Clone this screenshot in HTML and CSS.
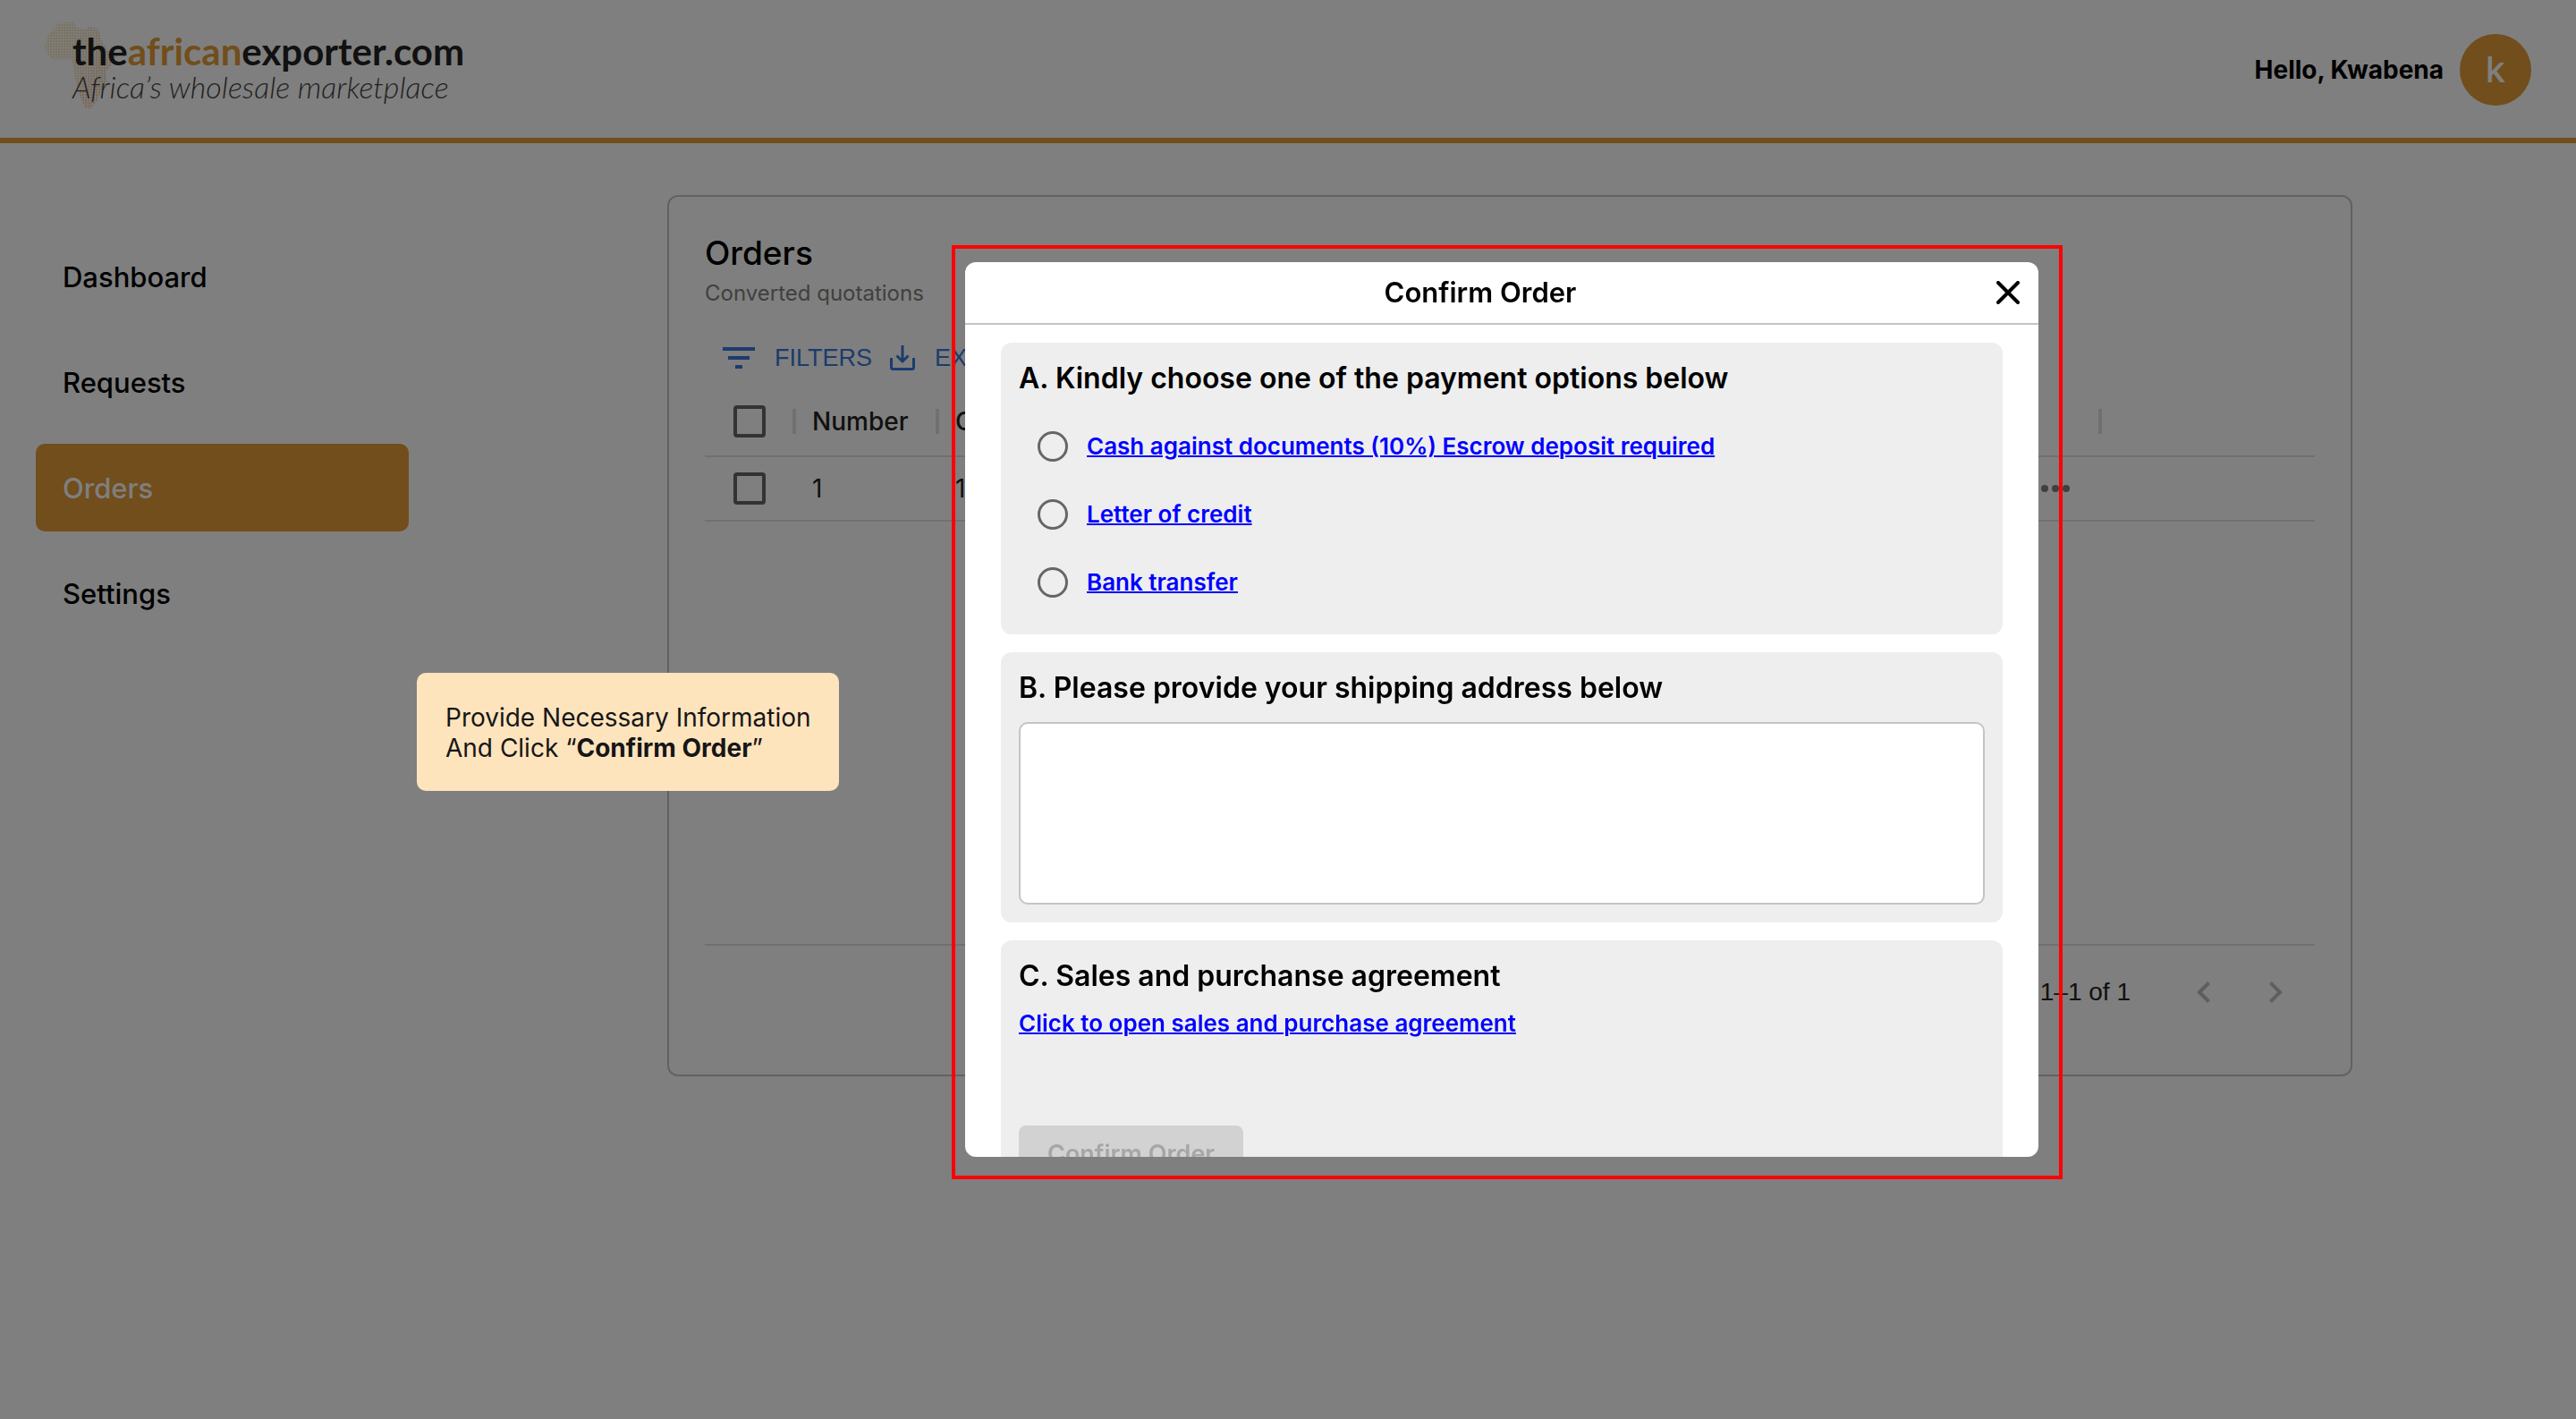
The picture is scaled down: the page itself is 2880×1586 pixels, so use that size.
FILE: index.html
```html
<!DOCTYPE html>
<html lang="en">
<head>
<meta charset="utf-8">
<meta name="viewport" content="width=device-width, initial-scale=1">
<title>Orders – theafricanexporter.com</title>
<link rel="stylesheet" href="styles.css">
</head>
<body>
<header class="topbar">
  <a class="logo" href="#">
    <svg class="logo-map" viewBox="0 0 82 98" aria-hidden="true">
      <defs>
        <linearGradient id="mapTint" x1="0" y1="0" x2="1" y2="0.5">
          <stop offset="0" stop-color="#f0e08c"/>
          <stop offset="0.45" stop-color="#f0d09c"/>
          <stop offset="1" stop-color="#e8b078"/>
        </linearGradient>
        <pattern id="mapDots" width="3" height="3" patternUnits="userSpaceOnUse">
          <rect width="3" height="3" fill="#333"/>
          <rect width="2" height="2" fill="#fff"/>
        </pattern>
        <mask id="mapMask"><rect width="82" height="98" fill="url(#mapDots)"/></mask>
      </defs>
      <path mask="url(#mapMask)" fill="url(#mapTint)" d="M15 2 L33 0 L35 6 L46 9 L50 5 L60 8 L63 20 L70 32 L81 37 L76 47 L68 56 L70 70 L63 78 L58 90 L52 97 L45 97 L38 80 L34 64 L32 50 L30 42 L10 43 L2 36 L0 27 L4 15 Z"/>
    </svg>
    <span class="logo-name">the<span class="logo-accent">african</span>exporter.com</span>
    <span class="logo-tagline">Africa’s wholesale marketplace</span>
  </a>
  <div class="account">
    <span class="account-name">Hello, Kwabena</span>
    <span class="avatar">k</span>
  </div>
</header>

<div class="page">
  <nav class="sidebar" aria-label="Main">
    <a class="nav-item" href="#">Dashboard</a>
    <a class="nav-item" href="#">Requests</a>
    <a class="nav-item nav-item-active" href="#" aria-current="page">Orders</a>
    <a class="nav-item" href="#">Settings</a>
  </nav>

  <main class="card">
    <h1 class="card-title">Orders</h1>
    <p class="card-subtitle">Converted quotations</p>
    <div class="toolbar">
      <button class="tool" type="button">
        <svg class="icon-filter" viewBox="0 0 36 24" aria-hidden="true"><path fill="currentColor" d="M0 0h36v4H0zM6 10h24v4H6zM14 20h8v4h-8z"/></svg>
        FILTERS
      </button>
      <button class="tool" type="button">
        <svg class="icon-export" viewBox="0 0 28 28" fill="none" stroke="currentColor" stroke-width="3" aria-hidden="true"><path d="M1.500 14v10.500a2 2 0 0 0 2 2h21a2 2 0 0 0 2-2V14M14 0v18M7.500 11.500l6.500 6.500 6.500-6.500"/></svg>
        EXPORT
      </button>
    </div>
    <div class="grid-body">
      <table class="orders">
        <colgroup>
          <col class="col-check"><col class="col-number"><col><col class="col-actions"><col class="col-rest">
        </colgroup>
        <thead>
          <tr>
            <th class="cell-check"><input class="check" type="checkbox" aria-label="Select all orders"></th>
            <th>Number</th>
            <th>Created</th>
            <th></th>
            <th class="cell-rest"></th>
          </tr>
        </thead>
        <tbody>
          <tr>
            <td class="cell-check"><input class="check" type="checkbox" aria-label="Select order 1"></td>
            <td>1</td>
            <td>1</td>
            <td class="cell-actions">
              <button class="icon-button" type="button" aria-label="Order actions">
                <svg class="icon-dots" viewBox="0 0 32 8" aria-hidden="true"><g fill="currentColor"><circle cx="4" cy="4" r="4"/><circle cx="16" cy="4" r="4"/><circle cx="28" cy="4" r="4"/></g></svg>
              </button>
            </td>
            <td></td>
          </tr>
        </tbody>
      </table>
    </div>
    <footer class="pager">
      <span class="pager-text">1–1 of 1</span>
      <button class="icon-button pager-button" type="button" aria-label="Previous page">
        <svg class="icon-chevron" viewBox="0 0 16 24" fill="none" stroke="currentColor" stroke-width="4" aria-hidden="true"><path d="M13.500 1.500L3 12l10.500 10.500"/></svg>
      </button>
      <button class="icon-button pager-button" type="button" aria-label="Next page">
        <svg class="icon-chevron" viewBox="0 0 16 24" fill="none" stroke="currentColor" stroke-width="4" aria-hidden="true"><path d="M2.500 1.500L13 12 2.500 22.500"/></svg>
      </button>
    </footer>
  </main>
</div>

<div class="backdrop">
  <div class="modal-frame">
    <section class="modal" role="dialog" aria-modal="true" aria-labelledby="modal-title">
      <header class="modal-header">
        <h2 class="modal-title" id="modal-title">Confirm Order</h2>
        <button class="modal-close" type="button" aria-label="Close">
          <svg class="icon-close" viewBox="0 0 26 26" fill="none" stroke="currentColor" stroke-width="4" stroke-linecap="round" aria-hidden="true"><path d="M2 2l22 22M24 2L2 24"/></svg>
        </button>
      </header>
      <div class="modal-body">
        <section class="panel">
          <h3 class="panel-title">A. Kindly choose one of the payment options below</h3>
          <div class="options">
            <div class="option">
              <input class="radio" type="radio" name="payment" id="pay-cash" aria-labelledby="pay-cash-label">
              <a class="link" id="pay-cash-label" href="#">Cash against documents (10%) Escrow deposit required</a>
            </div>
            <div class="option">
              <input class="radio" type="radio" name="payment" id="pay-letter" aria-labelledby="pay-letter-label">
              <a class="link" id="pay-letter-label" href="#">Letter of credit</a>
            </div>
            <div class="option">
              <input class="radio" type="radio" name="payment" id="pay-bank" aria-labelledby="pay-bank-label">
              <a class="link" id="pay-bank-label" href="#">Bank transfer</a>
            </div>
          </div>
        </section>
        <section class="panel">
          <h3 class="panel-title"><label for="address">B. Please provide your shipping address below</label></h3>
          <textarea class="address" id="address"></textarea>
        </section>
        <section class="panel">
          <h3 class="panel-title">C. Sales and purchanse agreement</h3>
          <p class="agreement"><a class="link" href="#">Click to open sales and purchase agreement</a></p>
          <button class="submit" type="submit" disabled>Confirm Order</button>
        </section>
      </div>
    </section>
    <div class="highlight"></div>
  </div>
</div>

<aside class="hint">Provide Necessary Information<br>And Click “<strong>Confirm Order</strong>”</aside>
</body>
</html>
```

FILE: styles.css
```css
:root {
  --brand: #e29c39;
  --line: #e0e0e0;
  --blue: #3878d8;
}

* { box-sizing: border-box; }

body {
  margin: 0;
  background: #fff;
  color: #000;
  font: 400 28px/36px Inter, "Liberation Sans", sans-serif;
}

h1, h2, h3, p { margin: 0; }

button {
  padding: 0;
  border: 0;
  background: none;
  color: inherit;
  font: inherit;
}

svg { display: block; flex: none; }

/* Top bar */
.topbar {
  display: flex;
  align-items: center;
  justify-content: space-between;
  height: 160px;
  padding: 0 50px 0 81px;
  border-bottom: 6px solid var(--brand);
}

.logo {
  position: relative;
  display: flex;
  flex-direction: column;
  padding-bottom: 4px;
  color: #222;
  font-family: Lato, sans-serif;
  text-decoration: none;
  white-space: nowrap;
}

.logo-map {
  position: absolute;
  left: -31px;
  top: -11px;
  width: 82px;
  height: 98px;
  opacity: 0.6;
}

.logo-name {
  position: relative;
  font-size: 42px;
  font-weight: 700;
  line-height: 44px;
}

.logo-accent { color: var(--brand); }

.logo-tagline {
  position: relative;
  color: #444;
  font-size: 34px;
  font-style: italic;
  font-weight: 300;
  line-height: 36px;
}

.account {
  display: flex;
  align-items: center;
  gap: 18px;
  padding-top: 1px;
}

.account-name { font-weight: 700; }

.avatar {
  display: grid;
  place-items: center;
  width: 80px;
  height: 80px;
  border-radius: 50%;
  background: var(--brand);
  color: #fff;
  font-size: 40px;
  font-weight: 500;
}

/* Page */
.page {
  display: flex;
  align-items: flex-start;
  gap: 289px;
  padding: 58px 250px 58px 40px;
}

.sidebar {
  display: flex;
  flex: none;
  flex-direction: column;
  gap: 20px;
  width: 417px;
  padding-top: 42px;
}

.nav-item {
  padding: 30px 30px 28px;
  border-radius: 10px;
  color: #000;
  font-size: 31px;
  font-weight: 500;
  line-height: 40px;
  text-decoration: none;
}

.nav-item-active {
  background: var(--brand);
  color: #fff;
}

.card {
  flex: 1;
  min-width: 0;
  padding: 40px;
  border: 2px solid #c4c4c4;
  border-radius: 12px;
}

.card-title {
  font-size: 37px;
  font-weight: 500;
  line-height: 46px;
}

.card-subtitle {
  color: #808080;
  font-size: 24px;
  line-height: 44px;
}

.toolbar {
  display: flex;
  align-items: center;
  gap: 20px;
  height: 56px;
  margin: 22px 0 4px;
  padding-left: 20px;
}

.tool {
  display: flex;
  align-items: center;
  gap: 22px;
  color: var(--blue);
  font-family: "Liberation Sans", Arial, sans-serif;
  font-size: 27px;
}

.icon-filter { width: 36px; height: 24px; }
.icon-export { width: 28px; height: 28px; }

.grid-body { min-height: 623px; }

.orders {
  width: 100%;
  border-collapse: separate;
  border-spacing: 0;
  table-layout: fixed;
}

.col-check, .col-actions { width: 100px; }
.col-number { width: 160px; }
.col-rest { width: 240px; }

.orders th,
.orders td {
  position: relative;
  height: 72px;
  padding: 0 20px;
  border-bottom: 2px solid var(--line);
  color: #222;
  text-align: left;
}

.orders th {
  height: 79px;
  font-weight: 500;
}

.orders th:not(.cell-rest)::after {
  content: "";
  position: absolute;
  right: -2px;
  top: 50%;
  width: 4px;
  height: 28px;
  margin-top: -14px;
  background: var(--line);
}

.orders .cell-check { padding: 0 0 0 32px; }
.orders .cell-actions { padding: 0; }
.cell-actions .icon-button { margin: 0 auto; }

.check {
  appearance: none;
  display: block;
  width: 36px;
  height: 36px;
  margin: 0;
  border: 4px solid #666;
  border-radius: 4px;
}

.icon-button {
  display: grid;
  place-items: center;
  width: 80px;
  height: 48px;
  color: #808080;
}

.icon-dots { width: 32px; height: 8px; }
.icon-chevron { width: 16px; height: 24px; }

.pager {
  display: flex;
  align-items: center;
  justify-content: flex-end;
  height: 106px;
  padding-right: 4px;
  border-top: 2px solid var(--line);
}

.pager-text {
  margin-right: 42px;
  color: #222;
  font-family: "Liberation Sans", Arial, sans-serif;
}

.pager-button { color: #bdbdbd; }

/* Modal */
.backdrop {
  position: fixed;
  inset: 0;
  display: flex;
  align-items: center;
  justify-content: center;
  padding-left: 478px;
  background: rgb(0 0 0 / 50%);
}

.modal-frame { position: relative; }

.modal {
  display: flex;
  flex-direction: column;
  width: 1200px;
  max-width: 100%;
  height: 1000px;
  max-height: 100vh;
  overflow: hidden;
  border-radius: 12px;
  background: #fff;
}

.modal-header {
  display: flex;
  flex: none;
  align-items: center;
  height: 70px;
  padding-right: 20px;
  border-bottom: 2px solid #c4c4c4;
}

.modal-title {
  flex: 1;
  font-size: 31px;
  font-weight: 600;
  line-height: 40px;
  text-align: center;
}

.modal-close {
  display: grid;
  place-items: center;
  width: 28px;
  height: 66px;
}

.icon-close { width: 26px; height: 26px; }

.modal-body {
  display: flex;
  flex: 1;
  flex-direction: column;
  gap: 20px;
  min-height: 0;
  padding: 20px 40px;
  overflow: hidden;
}

.panel {
  flex: none;
  padding: 20px;
  border-radius: 12px;
  background: #eee;
}

.panel-title {
  margin-bottom: 18px;
  font-size: 32px;
  font-weight: 600;
  line-height: 40px;
}

.options { padding-left: 21px; }

.option {
  display: flex;
  align-items: center;
  gap: 21px;
  height: 76px;
}

.radio {
  appearance: none;
  width: 34px;
  height: 34px;
  margin: 0;
  border: 3px solid #666;
  border-radius: 50%;
}

.link {
  color: #00f;
  font-size: 26px;
  font-weight: 600;
  text-decoration-thickness: 2px;
}

.agreement { line-height: 28px; }

.address {
  display: block;
  width: 100%;
  height: 204px;
  padding: 16px;
  border: 2px solid #c4c4c4;
  border-radius: 10px;
  background: #fff;
  font: inherit;
  resize: none;
}

.submit {
  display: block;
  margin-top: 100px;
  padding: 14px 32px;
  border-radius: 8px;
  background: #d2d2d2;
  color: #a6a6a6;
  font-size: 27px;
  font-weight: 600;
}

/* Walkthrough annotations */
.highlight {
  position: absolute;
  inset: -19px -27px -25px -15px;
  border: 4px solid #f00;
  pointer-events: none;
}

.hint {
  position: absolute;
  left: 466px;
  top: 752px;
  padding: 33px 31px 31px 32px;
  border-radius: 10px;
  background: #fee4bd;
  color: #161616;
  line-height: 34px;
  white-space: nowrap;
}
```
